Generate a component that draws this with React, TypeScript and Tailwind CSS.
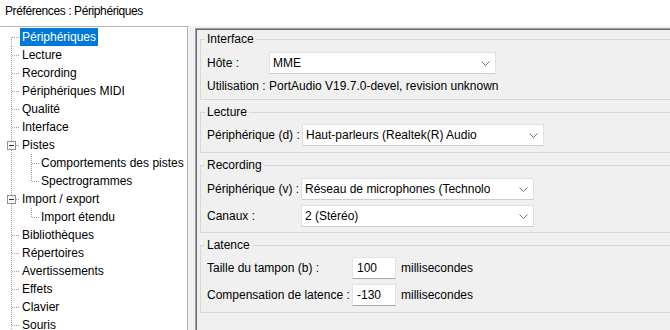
import React from "react";

type TreeItem = {
  label: string;
  level: 0 | 1;
  selected?: boolean;
  expander?: boolean;
  last?: boolean;
};

const TREE: TreeItem[] = [
  { label: "Périphériques", level: 0, selected: true },
  { label: "Lecture", level: 0 },
  { label: "Recording", level: 0 },
  { label: "Périphériques MIDI", level: 0 },
  { label: "Qualité", level: 0 },
  { label: "Interface", level: 0 },
  { label: "Pistes", level: 0, expander: true },
  { label: "Comportements des pistes", level: 1 },
  { label: "Spectrogrammes", level: 1, last: true },
  { label: "Import / export", level: 0, expander: true },
  { label: "Import étendu", level: 1, last: true },
  { label: "Bibliothèques", level: 0 },
  { label: "Répertoires", level: 0 },
  { label: "Avertissements", level: 0 },
  { label: "Effets", level: 0 },
  { label: "Clavier", level: 0 },
  { label: "Souris", level: 0 },
];

const DOT = "#a0a0a0";

function Gutter({ item, first }: { item: TreeItem; first: boolean }) {
  if (item.level === 1) {
    return (
      <svg width={39} height={18} className="shrink-0">
        <line x1={11.5} y1={0} x2={11.5} y2={18} stroke={DOT} strokeDasharray="1 1" />
        <line x1={31.5} y1={0} x2={31.5} y2={item.last ? 10 : 18} stroke={DOT} strokeDasharray="1 1" />
        <line x1={32} y1={9.5} x2={39} y2={9.5} stroke={DOT} strokeDasharray="1 1" />
      </svg>
    );
  }
  return (
    <svg width={20} height={18} className="shrink-0">
      {item.expander ? (
        <>
          <line x1={11.5} y1={0} x2={11.5} y2={5} stroke={DOT} strokeDasharray="1 1" />
          <line x1={11.5} y1={14} x2={11.5} y2={18} stroke={DOT} strokeDasharray="1 1" />
          <rect x={7.5} y={5.5} width={8} height={8} fill="#f7f7f7" stroke="#919191" />
          <line x1={9} y1={9.5} x2={14} y2={9.5} stroke="#333" />
          <line x1={16} y1={9.5} x2={20} y2={9.5} stroke={DOT} strokeDasharray="1 1" />
        </>
      ) : (
        <>
          <line x1={11.5} y1={first ? 9 : 0} x2={11.5} y2={18} stroke={DOT} strokeDasharray="1 1" />
          <line x1={12} y1={9.5} x2={20} y2={9.5} stroke={DOT} strokeDasharray="1 1" />
        </>
      )}
    </svg>
  );
}

function Chevron() {
  return (
    <svg width={9} height={5} className="shrink-0">
      <polyline points="0.5,0.5 4.5,4.5 8.5,0.5" fill="none" stroke="#707070" />
    </svg>
  );
}

function Combo({ value, className }: { value: string; className: string }) {
  return (
    <div
      className={`flex items-center justify-between h-[22px] bg-white border border-[#e1e1e1] border-b-[#cdcdcd] pl-[3px] pr-[5px] ${className}`}
    >
      <span className="whitespace-nowrap overflow-hidden">{value}</span>
      <Chevron />
    </div>
  );
}

function NumberField({ value }: { value: string }) {
  return (
    <div className="flex items-center h-[22px] w-[44px] bg-white border border-[#e3e3e3] border-b-[#a9a9a9] pl-[4px]">
      {value}
    </div>
  );
}

function Group({
  title,
  className,
  children,
}: {
  title: string;
  className?: string;
  children: React.ReactNode;
}) {
  return (
    <fieldset className={`border border-[#d7d7d7] px-[6px] min-w-0 ${className ?? ""}`}>
      <legend className="-ml-[2px] px-[2px] leading-[16px]">{title}</legend>
      {children}
    </fieldset>
  );
}

export default function App() {
  return (
    <div className="w-[670px] h-[330px] overflow-hidden bg-white flex flex-col text-[12px] leading-[16px] text-black font-['Liberation_Sans',Arial,sans-serif]">
      <div className="h-[26px] shrink-0 px-[5px] pt-[3px] tracking-[-0.4px]">Préférences : Périphériques</div>

      <div className="flex flex-1 min-h-0 bg-[#f0f0f0]">
        <div className="w-[188px] shrink-0 bg-white border-t border-r border-[#b4b4b4] pt-[1px] overflow-hidden">
          {TREE.map((item, i) => (
            <div key={item.label} className="flex h-[18px] items-center">
              <Gutter item={item} first={i === 0} />
              <span
                className={`px-[2px] h-[18px] leading-[18px] whitespace-nowrap ${
                  item.selected ? "bg-[#0078d7] text-white" : ""
                }`}
              >
                {item.label}
              </span>
            </div>
          ))}
        </div>

        <div className="ml-[7px] mt-[2px] w-[520px] shrink-0 border-t border-l border-[#a0a0a0] shadow-[inset_1px_1px_0_#696969] pl-[4px] pt-[2px] flex flex-col">
          <Group title="Interface" className="pb-[5px]">
            <div className="flex items-center mt-[5px]">
              <span className="w-[62px] shrink-0">Hôte :</span>
              <Combo value="MME" className="w-[227px]" />
            </div>
            <div className="mt-[4px] whitespace-nowrap">
              Utilisation : PortAudio V19.7.0-devel, revision unknown
            </div>
          </Group>

          <Group title="Lecture" className="mt-[4px] pb-[6px]">
            <div className="flex items-center mt-[4px]">
              <span className="w-[95px] shrink-0 whitespace-nowrap">Périphérique (d) :</span>
              <Combo value="Haut-parleurs (Realtek(R) Audio" className="w-[242px]" />
            </div>
          </Group>

          <Group title="Recording" className="mt-[4px] pb-[5px]">
            <div className="flex items-center mt-[5px]">
              <span className="w-[94px] shrink-0 whitespace-nowrap">Périphérique (v) :</span>
              <Combo value="Réseau de microphones (Technolo" className="w-[233px]" />
            </div>
            <div className="flex items-center mt-[5px]">
              <span className="w-[94px] shrink-0">Canaux :</span>
              <Combo value="2 (Stéréo)" className="w-[233px]" />
            </div>
          </Group>

          <Group title="Latence" className="mt-[4px] pb-[6px]">
            <div className="flex items-center mt-[4px]">
              <span className="w-[145px] shrink-0 whitespace-nowrap">Taille du tampon (b) :</span>
              <NumberField value="100" />
              <span className="ml-[5px]">millisecondes</span>
            </div>
            <div className="flex items-center mt-[5px]">
              <span className="w-[145px] shrink-0 whitespace-nowrap">Compensation de latence :</span>
              <NumberField value="-130" />
              <span className="ml-[5px]">millisecondes</span>
            </div>
          </Group>
        </div>
      </div>
    </div>
  );
}
